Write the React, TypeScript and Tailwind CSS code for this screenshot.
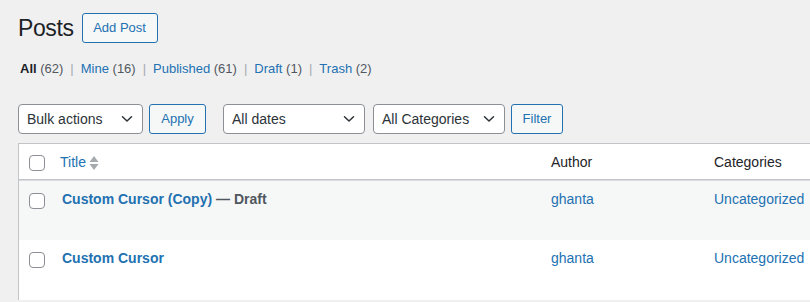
import React from "react";

const Chevron = () => (
  <svg width="12" height="8" viewBox="0 0 12 8" className="shrink-0">
    <path d="M1.5 1.8 L6 6 L10.5 1.8" fill="none" stroke="#2c3338" strokeWidth="1.5" strokeLinecap="round" strokeLinejoin="round" />
  </svg>
);

const Select = ({ label, w }: { label: string; w: string }) => (
  <div className={`${w} h-[30px] flex items-center justify-between pl-[8px] pr-[9px] border border-[#8c8f94] rounded-[4px] bg-white text-[14px] text-[#2c3338]`}>
    <span>{label}</span>
    <Chevron />
  </div>
);

const Btn = ({ label, w }: { label: string; w: string }) => (
  <div className={`${w} h-[30px] flex items-center justify-center border border-[#2271b1] rounded-[3px] bg-[#f6f7f7] text-[13px] text-[#2271b1]`}>
    {label}
  </div>
);

const Check = () => (
  <div className="w-[16px] h-[16px] border border-[#8c8f94] rounded-[4px] bg-white" />
);

const Sep = () => <span className="text-[#a7aaad] mx-[7px]">|</span>;

export default function App() {
  return (
    <div
      className="w-[810px] h-[302px] overflow-hidden bg-[#f0f0f1] pl-[18px]"
      style={{ fontFamily: '"Liberation Sans", Arial, sans-serif' }}
    >
      <div className="pt-[13px] flex items-center h-[43px]">
        <h1 className="text-[23px] leading-[30px] text-[#1d2327] font-normal mr-[8px] tracking-[-0.4px]">Posts</h1>
        <div className="w-[76px] h-[30px] flex items-center justify-center border border-[#2271b1] rounded-[3px] bg-[#f6f7f7] text-[13px] text-[#2271b1]">
          Add Post
        </div>
      </div>

      <div className="mt-[14px] h-[24px] leading-[24px] pl-[2px] text-[13px] text-[#50575e] flex items-center whitespace-pre">
        <span className="font-bold text-[#1d2327]">All</span>
        <span> (62)</span>
        <Sep />
        <span className="text-[#2271b1]">Mine</span>
        <span> (16)</span>
        <Sep />
        <span className="text-[#2271b1]">Published</span>
        <span> (61)</span>
        <Sep />
        <span className="text-[#2271b1]">Draft</span>
        <span> (1)</span>
        <Sep />
        <span className="text-[#2271b1]">Trash</span>
        <span> (2)</span>
      </div>

      <div className="mt-[23px] flex items-center h-[30px]">
        <Select label="Bulk actions" w="w-[125px]" />
        <div className="w-[6px]" />
        <Btn label="Apply" w="w-[57px]" />
        <div className="w-[17px]" />
        <Select label="All dates" w="w-[142px]" />
        <div className="w-[8px]" />
        <Select label="All Categories" w="w-[132px]" />
        <div className="w-[6px]" />
        <Btn label="Filter" w="w-[52px]" />
      </div>

      <div className="mt-[9px] border-l border-t border-[#c3c4c7] bg-white">
        <div className="grid grid-cols-[33px_491px_163px_1fr] h-[36px] pt-[2px] items-center border-b border-[#c3c4c7] text-[14px]">
          <div className="pl-[10px] flex items-center">
            <Check />
          </div>
          <div className="pl-[8px] flex items-center text-[#2271b1]">
            <span>Title</span>
            <svg width="10" height="16" viewBox="0 0 10 16" className="ml-[3px]">
              <path d="M5 1 L9.5 7 L0.5 7 Z" fill="#a7aaad" />
              <path d="M5 15 L9.5 9 L0.5 9 Z" fill="#a7aaad" />
            </svg>
          </div>
          <div className="pl-[8px] text-[#1d2327]">Author</div>
          <div className="pl-[8px] text-[#1d2327] whitespace-nowrap">Categories</div>
        </div>

        <div className="grid grid-cols-[33px_491px_163px_1fr] h-[60px] bg-[#f6f7f7] border-t border-[#dcdcde] text-[14px]">
          <div className="pl-[10px] pt-[12px]">
            <Check />
          </div>
          <div className="pl-[10px] pt-[8px] font-bold text-[#2271b1] whitespace-nowrap">
            Custom Cursor (Copy) <span className="text-[#50575e]">— Draft</span>
          </div>
          <div className="pl-[8px] pt-[8px] text-[#2271b1]">ghanta</div>
          <div className="pl-[8px] pt-[8px] text-[#2271b1] whitespace-nowrap">Uncategorized</div>
        </div>

        <div className="grid grid-cols-[33px_491px_163px_1fr] h-[60px] bg-white text-[14px]">
          <div className="pl-[10px] pt-[12px]">
            <Check />
          </div>
          <div className="pl-[10px] pt-[8px] font-bold text-[#2271b1] whitespace-nowrap">Custom Cursor</div>
          <div className="pl-[8px] pt-[8px] text-[#2271b1]">ghanta</div>
          <div className="pl-[8px] pt-[8px] text-[#2271b1] whitespace-nowrap">Uncategorized</div>
        </div>
      </div>
    </div>
  );
}
